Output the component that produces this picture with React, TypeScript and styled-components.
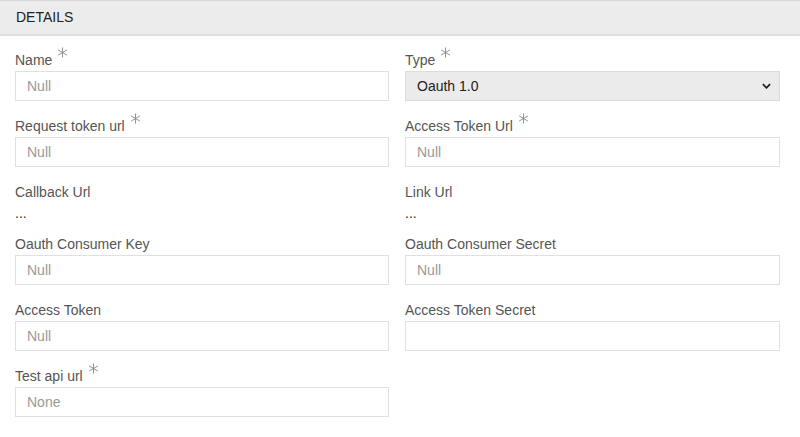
import styled, { createGlobalStyle } from 'styled-components'

const GlobalStyle = createGlobalStyle`
  html, body {
    margin: 0;
    padding: 0;
    background: #ffffff;
    font-family: "Liberation Sans", Arial, sans-serif;
  }
`

type Field = {
  label: string
  required?: boolean
  kind: 'input' | 'select' | 'text'
  value?: string
  placeholder?: string
}

const fields: Field[] = [
  { label: 'Name', required: true, kind: 'input', placeholder: 'Null' },
  { label: 'Type', required: true, kind: 'select', value: 'Oauth 1.0' },
  { label: 'Request token url', required: true, kind: 'input', placeholder: 'Null' },
  { label: 'Access Token Url', required: true, kind: 'input', placeholder: 'Null' },
  { label: 'Callback Url', kind: 'text', value: '...' },
  { label: 'Link Url', kind: 'text', value: '...' },
  { label: 'Oauth Consumer Key', kind: 'input', placeholder: 'Null' },
  { label: 'Oauth Consumer Secret', kind: 'input', placeholder: 'Null' },
  { label: 'Access Token', kind: 'input', placeholder: 'Null' },
  { label: 'Access Token Secret', kind: 'input', placeholder: '' },
  { label: 'Test api url', required: true, kind: 'input', placeholder: 'None' },
]

export default function App() {
  return (
    <>
      <GlobalStyle />
      <Panel>
        <Header>DETAILS</Header>
        <Form>
          {fields.map((f) => (
            <Group key={f.label} $compact={f.kind === 'text'}>
              <Label>
                {f.label}
                {f.required && <Star />}
              </Label>
              {f.kind === 'input' && <Input placeholder={f.placeholder} />}
              {f.kind === 'select' && (
                <SelectBox>
                  <span>{f.value}</span>
                  <Chevron viewBox="0 0 10 6">
                    <path d="M1 1 L5 5 L9 1" />
                  </Chevron>
                </SelectBox>
              )}
              {f.kind === 'text' && <Value>{f.value}</Value>}
            </Group>
          ))}
        </Form>
      </Panel>
    </>
  )
}

// 必須マーク
const Star = () => (
  <StarSvg viewBox="0 0 12 12">
    <line x1="6" y1="0.5" x2="6" y2="11.5" />
    <line x1="1.2" y1="3.2" x2="10.8" y2="8.8" />
    <line x1="1.2" y1="8.8" x2="10.8" y2="3.2" />
  </StarSvg>
)

const Panel = styled.div`
  width: 800px;
  background: #fff;
`

const Header = styled.div`
  height: 33px;
  line-height: 33px;
  padding-left: 16px;
  background: #ececec;
  border-top: 1px solid #d6d6d6;
  border-bottom: 2px solid #dedede;
  font-size: 14px;
  color: #222;
`

const Form = styled.div`
  display: grid;
  grid-template-columns: 374px 375px;
  column-gap: 16px;
  padding: 14px 20px 0 15px;
`

// 表示だけの行は詰める
const Group = styled.div<{ $compact?: boolean }>`
  display: flex;
  flex-direction: column;
  margin-bottom: ${(p) => (p.$compact ? '11px' : '15px')};
`

const Label = styled.div`
  height: 20px;
  line-height: 20px;
  margin-bottom: 1px;
  font-size: 14px;
  color: #555;
  display: flex;
  align-items: flex-start;
`

const StarSvg = styled.svg`
  width: 11px;
  height: 11px;
  margin-left: 5px;
  margin-top: -3px;
  stroke: #888;
  stroke-width: 1;
`

const Input = styled.input`
  box-sizing: border-box;
  height: 30px;
  width: 100%;
  padding: 0 11px;
  border: 1px solid #e0e0e0;
  border-radius: 0;
  background: #fff;
  font-family: "Liberation Sans", Arial, sans-serif;
  font-size: 14px;
  color: #333;
  outline: none;

  &::placeholder {
    color: #999;
  }
`

const SelectBox = styled.div`
  box-sizing: border-box;
  height: 30px;
  display: flex;
  align-items: center;
  justify-content: space-between;
  padding: 0 8px 0 11px;
  background: #ebebeb;
  border: 1px solid #dcdcdc;
  font-size: 14px;
  color: #222;
`

const Chevron = styled.svg`
  width: 9px;
  height: 6px;
  fill: none;
  stroke: #222;
  stroke-width: 2;
`

const Value = styled.div`
  height: 20px;
  line-height: 20px;
  font-size: 14px;
  color: #333;
`
